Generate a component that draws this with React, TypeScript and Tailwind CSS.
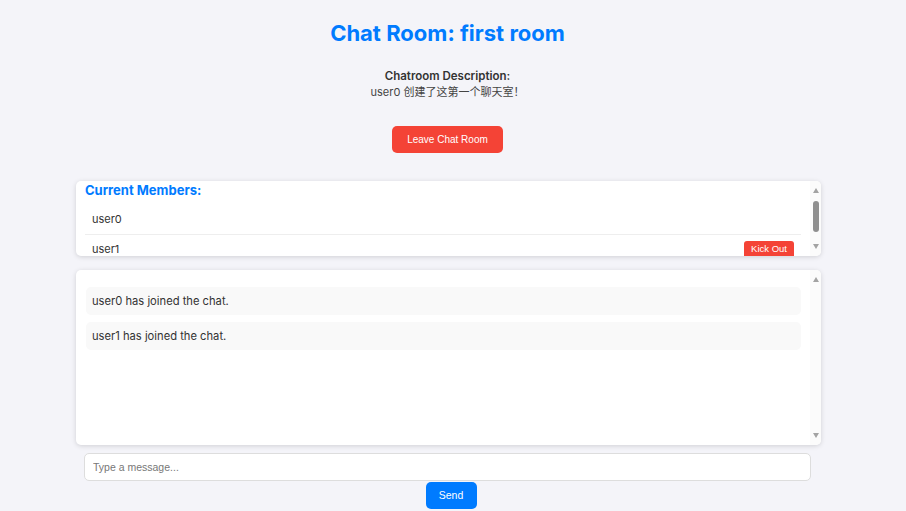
import { useEffect, useRef } from "react";

const members = [
  { name: "user0", owner: true },
  { name: "user1", owner: false },
];

const messages = ["user0 has joined the chat.", "user1 has joined the chat."];

function ScrollBar({ thumb }: { thumb?: boolean }) {
  return (
    <div className="flex w-[11px] shrink-0 flex-col items-center bg-[#fbfbfb] pt-[7px] pb-[7px]">
      <svg width="6" height="5" viewBox="0 0 6 5">
        <path d="M3 0 L6 5 L0 5 Z" fill="#a3a3a3" />
      </svg>
      <div className="flex flex-1 flex-col items-center">
        {thumb && <div className="mt-[8px] h-[31px] w-[6px] rounded-full bg-[#8f8f8f]" />}
      </div>
      <svg width="6" height="5" viewBox="0 0 6 5">
        <path d="M0 0 L6 0 L3 5 Z" fill="#a3a3a3" />
      </svg>
    </div>
  );
}

export default function App() {
  const listRef = useRef<HTMLDivElement>(null);

  useEffect(() => {
    if (listRef.current) listRef.current.scrollTop = 19;
  }, []);

  return (
    <div className="min-h-screen bg-[#f4f4f9] font-['Inter','Noto_Sans_CJK_SC',sans-serif] text-[#333]">
      <div className="flex flex-col items-center pt-[20px] pr-[11px]">
        <h1 className="text-[22px] leading-[26px] font-bold text-[#007bff]">
          Chat Room: first room
        </h1>
        <div className="mt-[22px] text-center leading-[16px]">
          <p className="text-[11.5px] font-semibold text-[#333]">Chatroom Description:</p>
          <p className="text-[11px] text-[#444]">user0 创建了这第一个聊天室！</p>
        </div>
        <button className="mt-[26px] h-[27px] w-[111px] rounded-[5px] bg-[#f44336] font-['Liberation_Sans',sans-serif] text-[10px] text-white">
          Leave Chat Room
        </button>
      </div>

      <div className="mt-[28px] ml-[76px] flex h-[75px] w-[745px] overflow-hidden rounded-[5px] bg-white shadow-[0_1px_5px_rgba(0,0,0,0.15)]">
        <div ref={listRef} className="flex-1 overflow-hidden pt-[20px] pr-[9px] pb-[20px] pl-[9px]">
          <h3 className="text-[13px] leading-[16px] font-bold text-[#007bff]">
            Current Members:
          </h3>
          <ul className="mt-[7px]">
            {members.map((m) => (
              <li
                key={m.name}
                className="flex h-[30px] items-center justify-between border-b border-[#eee] px-[7px] text-[11px]"
              >
                <span>{m.name}</span>
                {!m.owner && (
                  <button className="h-[17px] rounded-[3px] bg-[#f44336] px-[7px] font-['Liberation_Sans',sans-serif] text-[9.5px] text-white">
                    Kick Out
                  </button>
                )}
              </li>
            ))}
          </ul>
        </div>
        <ScrollBar thumb />
      </div>

      <div className="mt-[14px] ml-[76px] flex h-[175px] w-[745px] overflow-hidden rounded-[5px] bg-white shadow-[0_1px_5px_rgba(0,0,0,0.15)]">
        <div className="flex flex-1 flex-col gap-[7px] pt-[17px] pr-[9px] pl-[10px]">
          {messages.map((text) => (
            <div
              key={text}
              className="flex h-[28px] shrink-0 items-center rounded-[5px] bg-[#f9f9f9] px-[6px] text-[11.2px]"
            >
              {text}
            </div>
          ))}
        </div>
        <ScrollBar />
      </div>

      <div className="mt-[8px] flex flex-col items-center pr-[4px]">
        <input
          placeholder="Type a message..."
          className="ml-[84px] h-[28px] w-[727px] self-start rounded-[5px] border border-[#ddd] bg-white px-[8px] font-['Liberation_Sans',sans-serif] text-[10.5px] outline-none placeholder:text-[#777]"
        />
        <button className="mt-[1px] h-[27px] w-[51px] rounded-[5px] bg-[#007bff] font-['Liberation_Sans',sans-serif] text-[10.5px] text-white">
          Send
        </button>
      </div>
    </div>
  );
}
